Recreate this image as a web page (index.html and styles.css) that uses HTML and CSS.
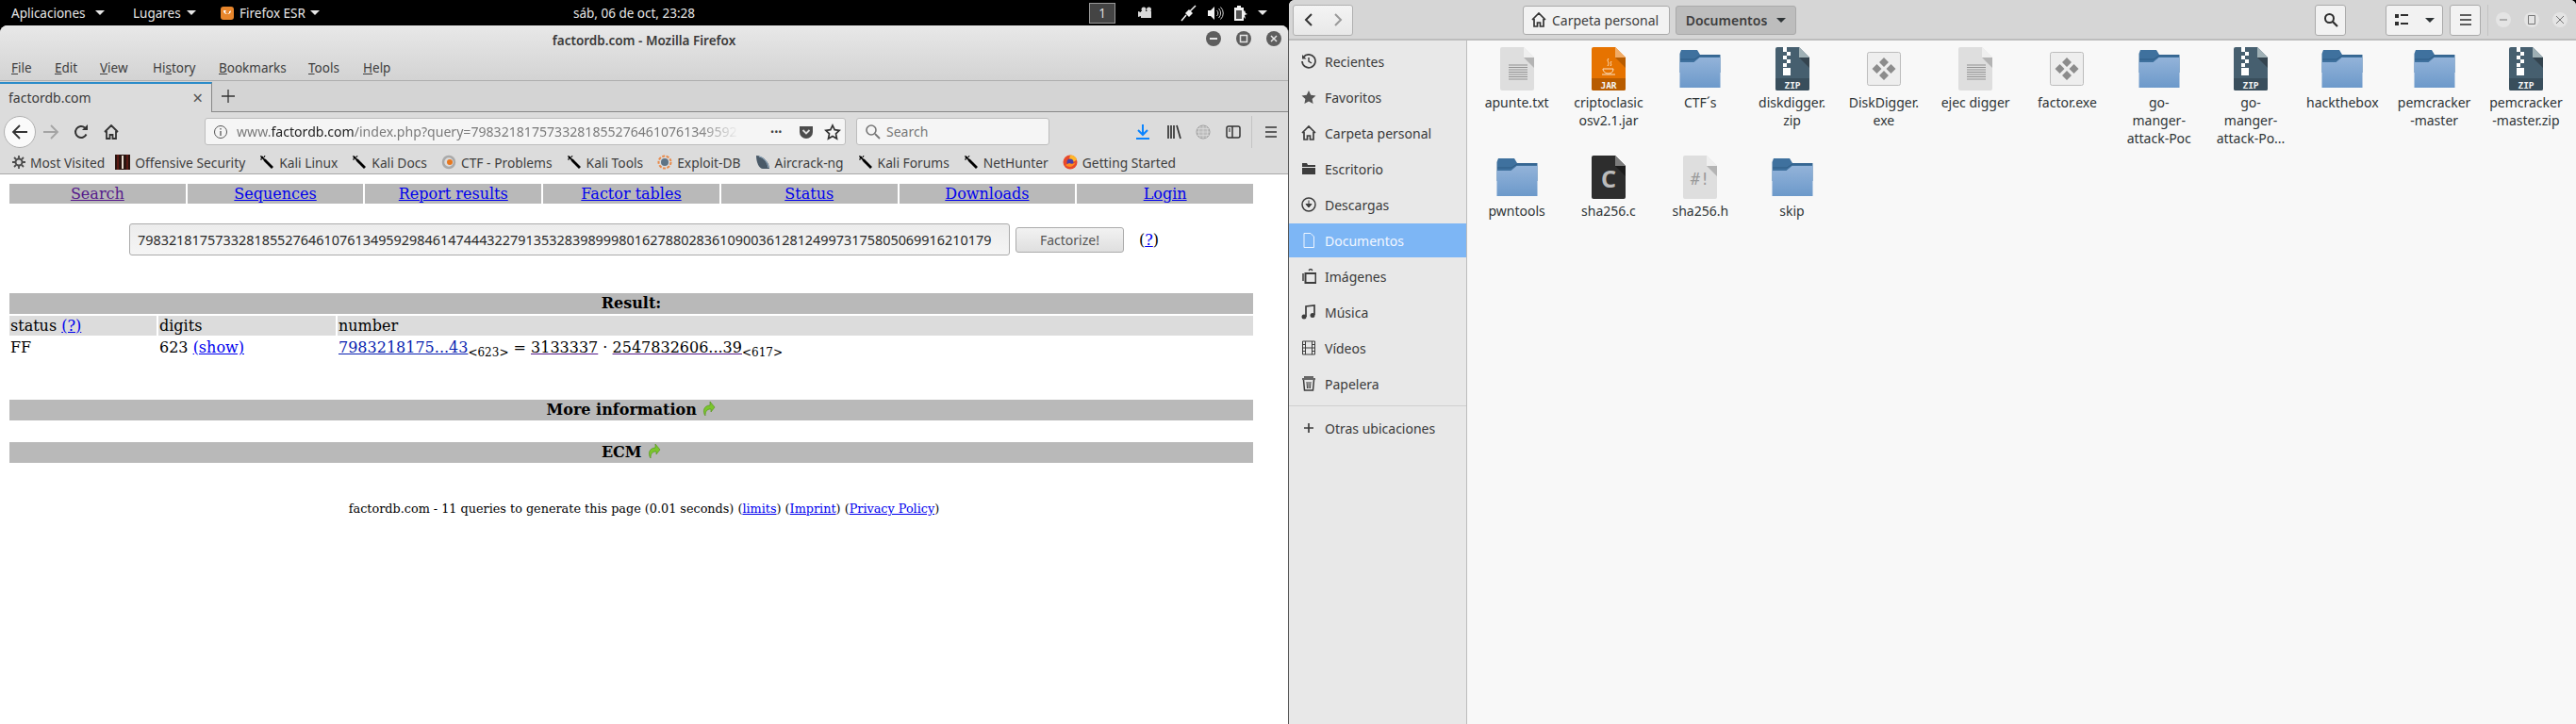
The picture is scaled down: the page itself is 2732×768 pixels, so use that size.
FILE: index.html
```html
<!DOCTYPE html>
<html lang="en">
<head>
    <meta charset="UTF-8">
    <title>factordb.com - Mozilla Firefox</title>
    <link rel="stylesheet" href="styles.css">
</head>
<body>
    <svg class="defs" width="0" height="0">
        <!-- bookmark torch -->
        <symbol id="kali" viewBox="0 0 16 16"><path d="M1 1l3 1 1 2 2 1 3 3 5 5-2 2-5-5-3-3-1-2-2-1z" fill="#000"/><path d="M5 3l1-2M3 5L1 5" stroke="#000"/></symbol>
        <!-- file icons -->
        <symbol id="folder" viewBox="0 0 48 48"><path d="M2.5 8v20h43V9H24l-3-5H4z" fill="#3f719e"/><path d="M3 14h15l6-4h21" stroke="#2f5c85" fill="none"/><path d="M2.500 44V17h15l6-5h22v32z" fill="url(#fold)"/><defs><linearGradient id="fold" x1="0" y1="0" x2="0" y2="1"><stop offset="0" stop-color="#93b3d9"/><stop offset="1" stop-color="#6c99ca"/></linearGradient></defs></symbol>
        <symbol id="txt" viewBox="0 0 48 48"><path d="M6 3a2 2 0 0 1 2-2h23l11 11v33a2 2 0 0 1-2 2H8a2 2 0 0 1-2-2z" fill="#dedede"/><path d="M31 1l11 11H31z" fill="#efefef"/><path d="M31 12h11v11z" fill="#b4b4b4"/><path d="M15 20h20M15 22.500h20M15 25h20M15 27.500h20M15 30h20M15 32.500h20M15 35h20" stroke="#919191"/></symbol>
        <symbol id="jar" viewBox="0 0 48 48"><path d="M6 3a2 2 0 0 1 2-2h23l11 11v33a2 2 0 0 1-2 2H8a2 2 0 0 1-2-2z" fill="#e67300"/><path d="M31 1l11 11H31z" fill="#f1ab66"/><path d="M31 12h11v11z" fill="#b85c00"/><path d="M6 34h36v11a2 2 0 0 1-2 2H8a2 2 0 0 1-2-2z" fill="#b85c00"/><path d="M24 13c-3 3 2 4-1 8M27 16c-2 2 1 3-1 5M18 24h11c0 3-2 5-5 5s-6-2-6-5zM17 30h14" stroke="#fbe3c7" fill="none"/></symbol>
        <symbol id="zip" viewBox="0 0 48 48"><path d="M6 3a2 2 0 0 1 2-2h23l11 11v33a2 2 0 0 1-2 2H8a2 2 0 0 1-2-2z" fill="#465f6f"/><path d="M31 1l11 11H31z" fill="#9fb0b5"/><path d="M31 12h11v11z" fill="#34444f"/><path d="M6 34h36v11a2 2 0 0 1-2 2H8a2 2 0 0 1-2-2z" fill="#394e5c"/><path d="M14 1h4v5h-4zM18 6h4v4h-4zM14 10h4v4h-4zM18 14h4v4h-4zM14 18h4v4h-4zM14 23h8v8h-8z" fill="#fff"/></symbol>
        <symbol id="exe" viewBox="0 0 48 48"><rect x="6.500" y="6.500" width="35" height="35" rx="2" fill="#eee" stroke="#bdbdbd"/><path d="M24 12l5 5-5 5-5-5zM16.500 19l5 5-5 5-5-5zM31.500 19l5 5-5 5-5-5zM24 26l5 5-5 5-5-5z" fill="#8c8c8c"/></symbol>
        <symbol id="csrc" viewBox="0 0 48 48"><path d="M6 3a2 2 0 0 1 2-2h23l11 11v33a2 2 0 0 1-2 2H8a2 2 0 0 1-2-2z" fill="#2d2d2d"/><path d="M31 1l11 11H31z" fill="#7c7c7c"/><path d="M31 12h11v11z" fill="#1c1c1c"/></symbol>
        <symbol id="hdr" viewBox="0 0 48 48"><path d="M6 3a2 2 0 0 1 2-2h23l11 11v33a2 2 0 0 1-2 2H8a2 2 0 0 1-2-2z" fill="#dedede"/><path d="M31 1l11 11H31z" fill="#efefef"/><path d="M31 12h11v11z" fill="#b4b4b4"/></symbol>
        <symbol id="go-arrow" viewBox="0 0 15 16"><path d="M9 0l5 6-4 5V8C6 8 4 10 4 15 1 11 2 4 9 4z" fill="#7ac52c" stroke="#4f8f16" stroke-width=".6"/></symbol>
    </svg>

    <div class="desktop">
        <div class="left-side">
            <div class="topbar">
                <span class="top-item top-apps">Aplicaciones <i class="caret"></i></span>
                <span class="top-item top-places">Lugares <i class="caret"></i></span>
                <span class="top-item top-ff">
                    <svg width="16" height="16" viewBox="0 0 16 16"><rect x="1" y="1" width="14" height="14" rx="3" fill="#e8862c"/><path d="M4 5a4 4 0 1 0 8 0c-1 1-1 1-2 1a2 2 0 1 1-3-1z" fill="#fff"/></svg>
                    Firefox ESR <i class="caret"></i>
                </span>
                <span class="top-clock">sáb, 06 de oct, 23:28</span>
                <span class="workspace">1</span>
                <span class="tray">
                    <svg width="18" height="16" viewBox="0 0 18 16"><path d="M1 6l3 1V6h11v7H4v-2l-3 1z" fill="#d8d8d8"/><circle cx="7" cy="4" r="2.500" fill="#d8d8d8"/><circle cx="12.500" cy="4" r="2.500" fill="#d8d8d8"/></svg>
                    <svg class="tray-plug" width="18" height="18" viewBox="0 0 18 18"><path d="M1 17l5-6M10 7l6-6" stroke="#f2f2f2" stroke-width="1.500"/><path d="M5 9l4-4 4 4-4 4z" fill="#f2f2f2"/></svg>
                    <svg class="tray-vol" width="18" height="16" viewBox="0 0 18 16"><path d="M1 5h3l4-4v14l-4-4H1z" fill="#f2f2f2"/><path d="M10.500 5a4 4 0 0 1 0 6M12.500 3a7 7 0 0 1 0 10M14.500 1.500a9 9 0 0 1 0 13" stroke="#ccc" fill="none"/></svg>
                    <svg class="tray-bat" width="18" height="18" viewBox="0 0 18 18"><path d="M3 3h3V1h4v2h3v14H3z" fill="#f2f2f2"/><path d="M5 6h6v9H5z" fill="#555"/><path d="M12 8l2-2 1 3 2 1-3 1 1 4-3-3z" fill="#f2f2f2"/></svg>
                    <i class="caret caret-tray"></i>
                </span>
            </div>

            <div class="ff-window">
                <div class="ff-head">
                    <div class="ff-title">factordb.com - Mozilla Firefox
                        <span class="ff-buttons">
                            <span class="wm-btn"><svg width="16" height="16" viewBox="0 0 16 16"><path d="M4 7h8v2H4z" fill="#e6e6e6"/></svg></span>
                            <span class="wm-btn"><svg width="16" height="16" viewBox="0 0 16 16"><path d="M4.500 4.500h7v7h-7z" fill="none" stroke="#e6e6e6" stroke-width="1.500"/></svg></span>
                            <span class="wm-btn"><svg width="16" height="16" viewBox="0 0 16 16"><path d="M5 5l6 6M11 5l-6 6" stroke="#e6e6e6" stroke-width="1.500"/></svg></span>
                        </span>
                    </div>
                    <div class="ff-menu">
                        <span class="m-file"><u>F</u>ile</span>
                        <span class="m-edit"><u>E</u>dit</span>
                        <span class="m-view"><u>V</u>iew</span>
                        <span class="m-hist">Hi<u>s</u>tory</span>
                        <span class="m-book"><u>B</u>ookmarks</span>
                        <span class="m-tools"><u>T</u>ools</span>
                        <span class="m-help"><u>H</u>elp</span>
                    </div>
                </div>

                <div class="ff-tabs">
                    <div class="tab">factordb.com <span class="tab-close">×</span></div>
                    <svg class="tab-new" width="16" height="16" viewBox="0 0 16 16"><path d="M8 1v14M1 8h14" stroke="#333" stroke-width="1.300"/></svg>
                </div>

                <div class="ff-nav">
                    <span class="back-btn"><svg width="18" height="18" viewBox="0 0 18 18"><path d="M2 9h15M9 2L2 9l7 7" stroke="#333" stroke-width="1.800" fill="none"/></svg></span>
                    <svg class="nav-fwd" width="18" height="18" viewBox="0 0 18 18"><path d="M1 9h15M9 2l7 7-7 7" stroke="#a4a4a4" stroke-width="1.800" fill="none"/></svg>
                    <svg class="nav-reload" width="16" height="16" viewBox="0 0 16 16"><path d="M13.500 10.500A6 6 0 1 1 12 3.500" stroke="#333" stroke-width="2" fill="none"/><path d="M9 6h6V0z" fill="#333"/></svg>
                    <svg class="nav-home" width="16" height="16" viewBox="0 0 16 16"><path d="M1 8l7-7 7 7M3 7v8h3.500v-4h3v4H13V7" stroke="#333" stroke-width="1.800" fill="none"/></svg>
                    <div class="urlbar">
                        <svg width="16" height="16" viewBox="0 0 16 16"><circle cx="8" cy="8" r="6.500" fill="none" stroke="#555"/><path d="M8 7v5M8 4v1.500" stroke="#555" stroke-width="1.300"/></svg>
                        <span class="url-text">www.<b>factordb.com</b>/index.php?query=79832181757332818552764610761349592</span>
                        <span class="url-dots">•••</span>
                        <svg class="url-pocket" width="16" height="16" viewBox="0 0 16 16"><path d="M1 2h14v6a7 7 0 0 1-14 0z" fill="#4c4c4c"/><path d="M4.500 6L8 9.500 11.500 6" stroke="#ddd" stroke-width="1.800" fill="none"/></svg>
                        <svg class="url-star" width="18" height="18" viewBox="0 0 18 18"><path d="M9 2l2.200 4.700 5 .6-3.700 3.500 1 5.200L9 13.500 4.500 16l1-5.200L1.800 7.300l5-.6z" fill="none" stroke="#333" stroke-width="1.700"/></svg>
                    </div>
                    <div class="searchbar">
                        <svg width="17" height="17" viewBox="0 0 17 17"><circle cx="7" cy="7" r="5" fill="none" stroke="#777" stroke-width="1.600"/><path d="M11 11l5 5" stroke="#777" stroke-width="1.800"/></svg>
                        <span>Search</span>
                    </div>
                    <svg class="tool-dl" width="16" height="18" viewBox="0 0 16 18"><path d="M8 1v11M3 7l5 5 5-5" stroke="#0a84ff" stroke-width="2" fill="none"/><path d="M1 16h14" stroke="#0a84ff" stroke-width="2"/></svg>
                    <svg class="tool-lib" width="16" height="16" viewBox="0 0 16 16"><path d="M2 1v14M5 1v14M8 1v14M11 1l4 14" stroke="#333" stroke-width="1.700"/></svg>
                    <svg class="tool-globe" width="16" height="16" viewBox="0 0 16 16"><circle cx="8" cy="8" r="7" fill="#bdbdbd" stroke="#9a9a9a"/><path d="M1 8h14M8 1v14M2 4.500h12M2 11.500h12M5 2c-2 3-2 9 0 12M11 2c2 3 2 9 0 12" stroke="#dedede" fill="none" stroke-width=".7"/></svg>
                    <svg class="tool-side" width="16" height="16" viewBox="0 0 16 16"><rect x="1" y="2" width="14" height="12" rx="2" fill="none" stroke="#333" stroke-width="1.500"/><path d="M7 2v12" stroke="#333" stroke-width="1.500"/><path d="M3 5h2M3 7h2" stroke="#333"/></svg>
                    <span class="tool-sep"></span>
                    <svg class="tool-menu" width="14" height="14" viewBox="0 0 14 14"><path d="M1 2h12M1 7h12M1 12h12" stroke="#333" stroke-width="1.500"/></svg>
                </div>

                <div class="ff-bookmarks">
                    <span class="bm bm-first"><svg width="14" height="14" viewBox="0 0 14 14"><circle cx="7" cy="7" r="3.500" fill="none" stroke="#4c4c4c" stroke-width="2"/><path d="M7 0v3M7 11v3M0 7h3M11 7h3M2 2l2 2M10 10l2 2M12 2l-2 2M4 10l-2 2" stroke="#4c4c4c" stroke-width="1.800"/></svg>Most Visited</span>
                    <span class="bm"><svg width="16" height="16" viewBox="0 0 16 16"><rect width="16" height="16" fill="#2a1510"/><path d="M2 0h2v16H2zM12 0h2v16h-2z" fill="#5a1a14"/><path d="M7 1h2v14H7z" fill="#e9dcd0"/></svg>Offensive Security</span>
                    <span class="bm"><svg width="16" height="16"><use href="#kali"/></svg>Kali Linux</span>
                    <span class="bm"><svg width="16" height="16"><use href="#kali"/></svg>Kali Docs</span>
                    <span class="bm"><svg width="16" height="16" viewBox="0 0 16 16"><circle cx="8" cy="8" r="6" fill="none" stroke="#a9a9a9" stroke-width="2.500"/><circle cx="9" cy="8" r="3" fill="#e8771e"/></svg>CTF - Problems</span>
                    <span class="bm"><svg width="16" height="16"><use href="#kali"/></svg>Kali Tools</span>
                    <span class="bm"><svg width="16" height="16" viewBox="0 0 16 16"><circle cx="8" cy="8" r="6.500" fill="none" stroke="#e98a4a" stroke-width="2" stroke-dasharray="3 1.500"/><circle cx="8" cy="8" r="4" fill="#5f7486"/></svg>Exploit-DB</span>
                    <span class="bm"><svg width="16" height="16" viewBox="0 0 16 16"><path d="M1 1c7 0 14 7 14 14H8C4 15 1 8 1 1z" fill="#4a5a68"/><path d="M4 2c5 1 9 6 10 12" stroke="#9db7cf" fill="none"/></svg>Aircrack-ng</span>
                    <span class="bm"><svg width="16" height="16"><use href="#kali"/></svg>Kali Forums</span>
                    <span class="bm"><svg width="16" height="16"><use href="#kali"/></svg>NetHunter</span>
                    <span class="bm"><svg width="16" height="16" viewBox="0 0 16 16"><circle cx="8" cy="8" r="7.500" fill="#e8492a"/><path d="M8 .5a7.500 7.500 0 0 1 7 5L11 8 7 5z" fill="#ffb628"/><circle cx="8" cy="8" r="3.500" fill="#4a3fa8"/><path d="M3 11c3 3 8 3 11-3-2 2-5 2-7 1z" fill="#ff8a1e"/></svg>Getting Started</span>
                </div>

                <div class="page">
                    <div class="site-nav">
                        <a class="visited" href="#">Search</a>
                        <a href="#">Sequences</a>
                        <a href="#">Report results</a>
                        <a href="#">Factor tables</a>
                        <a href="#">Status</a>
                        <a href="#">Downloads</a>
                        <a href="#">Login</a>
                    </div>

                    <form class="query">
                        <input class="query-input" type="text" value="79832181757332818552764610761349592984614744432279135328398999801627880283610900361281249973175805069916210179">
                        <button class="query-btn" type="button">Factorize!</button>
                        <span class="query-help">(<a href="#">?</a>)</span>
                    </form>

                    <div class="bar result-bar">Result:</div>
                    <div class="result-row result-head">
                        <div>status <a href="#">(?)</a></div>
                        <div>digits</div>
                        <div>number</div>
                    </div>
                    <div class="result-row result-data">
                        <div>FF</div>
                        <div>623 <a href="#">(show)</a></div>
                        <div><a class="num-comp" href="#">7983218175...43</a><sub>&lt;623&gt;</sub> = <a class="num-fact" href="#">3133337</a> · <a class="num-fact" href="#">2547832606...39</a><sub>&lt;617&gt;</sub></div>
                    </div>

                    <div class="bar more-bar">More information <svg width="15" height="16"><use href="#go-arrow"/></svg></div>
                    <div class="bar ecm-bar">ECM <svg width="15" height="16"><use href="#go-arrow"/></svg></div>

                    <p class="page-foot">factordb.com - 11 queries to generate this page (0.01 seconds) (<a href="#">limits</a>) (<a href="#">Imprint</a>) (<a href="#">Privacy Policy</a>)</p>
                </div>
            </div>
        </div>

        <div class="files">
            <div class="files-toolbar">
                <div class="hist-btns">
                    <svg width="16" height="16" viewBox="0 0 16 16"><path d="M11 2L5 8l6 6" stroke="#333" stroke-width="2" fill="none"/></svg>
                    <svg width="16" height="16" viewBox="0 0 16 16"><path d="M5 2l6 6-6 6" stroke="#999" stroke-width="2" fill="none"/></svg>
                </div>
                <div class="path-btn">
                    <svg width="16" height="16" viewBox="0 0 16 16"><path d="M1 8l7-7 7 7M3 7v8h3.500v-4h3v4H13V7" stroke="#333" stroke-width="1.700" fill="none"/></svg>
                    Carpeta personal
                </div>
                <span class="path-slash"></span>
                <div class="path-btn path-current">Documentos <i class="caret caret-dark"></i></div>
                <div class="tool-btn tool-search"><svg width="16" height="16" viewBox="0 0 16 16"><circle cx="6.500" cy="6.500" r="4.500" fill="none" stroke="#2e2e2e" stroke-width="2"/><path d="M10 10l5 5" stroke="#2e2e2e" stroke-width="2.200"/></svg></div>
                <div class="tool-btn tool-view">
                    <svg width="16" height="16" viewBox="0 0 16 16"><path d="M1 2h4v4H1zM1 10h4v4H1z" fill="#2e2e2e"/><path d="M7 3h8M7 12h8" stroke="#2e2e2e" stroke-width="2"/></svg>
                    <i class="caret caret-dark"></i>
                </div>
                <div class="tool-btn tool-burger"><svg width="14" height="14" viewBox="0 0 14 14"><path d="M1 2h12M1 7h12M1 12h12" stroke="#2e2e2e" stroke-width="1.700"/></svg></div>
                <span class="files-sep"></span>
                <span class="win-btn win-min"><svg width="12" height="12" viewBox="0 0 12 12"><path d="M2 6h8" stroke="#777"/></svg></span>
                <span class="win-btn"><svg width="12" height="12" viewBox="0 0 12 12"><path d="M2.500 1.500h7v9h-7z" stroke="#777" fill="none"/></svg></span>
                <span class="win-btn"><svg width="12" height="12" viewBox="0 0 12 12"><path d="M2 2l8 8M10 2l-8 8" stroke="#777"/></svg></span>
            </div>

            <div class="files-body">
                <div class="sidebar">
                    <div class="side-row"><svg width="16" height="16" viewBox="0 0 16 16"><path d="M2.500 3.500A7 7 0 1 1 1 8" fill="none" stroke="#3d3d3d" stroke-width="1.700"/><path d="M1 1v4.500h4.500z" fill="#3d3d3d"/><path d="M8 4v4l3 2" fill="none" stroke="#3d3d3d" stroke-width="1.500"/></svg>Recientes</div>
                    <div class="side-row"><svg width="16" height="16" viewBox="0 0 16 16"><path d="M8 1l2.200 4.800 5.300.6-3.900 3.500 1 5.100L8 12.500 3.400 15l1-5.100L.5 6.400l5.300-.6z" fill="#555"/></svg>Favoritos</div>
                    <div class="side-row"><svg width="16" height="16" viewBox="0 0 16 16"><path d="M1 8l7-7 7 7M3 7v8h3.500v-4h3v4H13V7" stroke="#3d3d3d" stroke-width="1.700" fill="none"/></svg>Carpeta personal</div>
                    <div class="side-row"><svg width="16" height="16" viewBox="0 0 16 16"><path d="M1 2h5l1 2h8v2H1z" fill="#3d3d3d"/><path d="M1 7h14v7H1z" fill="#3d3d3d"/></svg>Escritorio</div>
                    <div class="side-row"><svg width="16" height="16" viewBox="0 0 16 16"><circle cx="8" cy="8" r="7" fill="none" stroke="#3d3d3d" stroke-width="1.500"/><path d="M8 3.500v6M5 7.500l3 3.500 3-3.500z" fill="#3d3d3d" stroke="#3d3d3d"/></svg>Descargas</div>
                    <div class="side-row side-active"><svg width="16" height="16" viewBox="0 0 16 16"><path d="M3 .5h7L13.500 4v11.500H3z" fill="none" stroke="#eef5ff"/></svg>Documentos</div>
                    <div class="side-row"><svg width="16" height="16" viewBox="0 0 16 16"><path d="M4.500 5h11v10h-11z" fill="none" stroke="#3d3d3d" stroke-width="2"/><path d="M2 5v8M8 2l2-2 2 2" stroke="#3d3d3d" stroke-width="1.500" fill="none"/></svg>Imágenes</div>
                    <div class="side-row"><svg width="16" height="16" viewBox="0 0 16 16"><path d="M5 13V2l9-1v10" stroke="#3d3d3d" stroke-width="1.700" fill="none"/><circle cx="3" cy="13" r="2.500" fill="#3d3d3d"/><circle cx="12" cy="11.500" r="2.500" fill="#3d3d3d"/></svg>Música</div>
                    <div class="side-row"><svg width="16" height="16" viewBox="0 0 16 16"><path d="M1.500 1h13v14h-13zM4.500 1v14M11.500 1v14M4.500 8h7M1.500 4.500h3M1.500 8h3M1.500 11.500h3M11.500 4.500h3M11.500 8h3M11.500 11.500h3" stroke="#3d3d3d" fill="none"/></svg>Vídeos</div>
                    <div class="side-row"><svg width="16" height="16" viewBox="0 0 16 16"><path d="M1 3h14M3 1h10M2.500 4l1 11h9l1-11" stroke="#3d3d3d" stroke-width="1.500" fill="none"/><path d="M6 6l.5 7M8 6v7M10 6l-.5 7" stroke="#3d3d3d"/></svg>Papelera</div>
                    <div class="side-sep"></div>
                    <div class="side-row side-other"><svg width="16" height="16" viewBox="0 0 16 16"><path d="M8 3v10M3 8h10" stroke="#3d3d3d" stroke-width="1.700"/></svg>Otras ubicaciones</div>
                </div>

                <div class="file-grid">
                    <div class="file"><svg width="48" height="48"><use href="#txt"/></svg><span>apunte.txt</span></div>
                    <div class="file"><svg width="48" height="48"><use href="#jar"/><text x="24" y="44.500" text-anchor="middle" class="badge">JAR</text></svg><span>criptoclasic<br>osv2.1.jar</span></div>
                    <div class="file"><svg width="48" height="48"><use href="#folder"/></svg><span>CTF´s</span></div>
                    <div class="file"><svg width="48" height="48"><use href="#zip"/><text x="24" y="44.500" text-anchor="middle" class="badge">ZIP</text></svg><span>diskdigger.<br>zip</span></div>
                    <div class="file"><svg width="48" height="48"><use href="#exe"/></svg><span>DiskDigger.<br>exe</span></div>
                    <div class="file"><svg width="48" height="48"><use href="#txt"/></svg><span>ejec digger</span></div>
                    <div class="file"><svg width="48" height="48"><use href="#exe"/></svg><span>factor.exe</span></div>
                    <div class="file"><svg width="48" height="48"><use href="#folder"/></svg><span>go-<br>manger-<br>attack-Poc</span></div>
                    <div class="file"><svg width="48" height="48"><use href="#zip"/><text x="24" y="44.500" text-anchor="middle" class="badge">ZIP</text></svg><span>go-<br>manger-<br>attack-Po...</span></div>
                    <div class="file"><svg width="48" height="48"><use href="#folder"/></svg><span>hackthebox</span></div>
                    <div class="file"><svg width="48" height="48"><use href="#folder"/></svg><span>pemcracker<br>-master</span></div>
                    <div class="file"><svg width="48" height="48"><use href="#zip"/><text x="24" y="44.500" text-anchor="middle" class="badge">ZIP</text></svg><span>pemcracker<br>-master.zip</span></div>
                    <div class="file"><svg width="48" height="48"><use href="#folder"/></svg><span>pwntools</span></div>
                    <div class="file"><svg width="48" height="48"><use href="#csrc"/><text x="24" y="35" text-anchor="middle" class="c-letter">C</text></svg><span>sha256.c</span></div>
                    <div class="file"><svg width="48" height="48"><use href="#hdr"/><text x="24" y="32" text-anchor="middle" class="h-letter">#!</text></svg><span>sha256.h</span></div>
                    <div class="file"><svg width="48" height="48"><use href="#folder"/></svg><span>skip</span></div>
                </div>
            </div>
        </div>
    </div>
</body>
</html>
```

FILE: styles.css
```css
html, body {
    margin: 0;
    height: 100%;
    overflow: hidden;
    background: #000;
}

body {
    font-family: "Noto Sans", sans-serif;
    font-size: 14px;
    color: #2e3436;
}

.defs {
    position: absolute;
}

.badge {
    font: bold 9.500px "DejaVu Sans Mono", monospace;
    fill: #f4f4f4;
}

.c-letter {
    font: bold 25px "Noto Sans", sans-serif;
    fill: #bbb;
}

.h-letter {
    font: 17px "DejaVu Sans Mono", monospace;
    fill: #9a9a9a;
}

.desktop {
    display: flex;
    width: 2732px;
    height: 768px;
}

.left-side {
    width: 1367px;
    flex: none;
    display: flex;
    flex-direction: column;
}

/* top panel */
.topbar {
    height: 27px;
    display: flex;
    align-items: center;
    color: #e6e6e6;
    font-size: 13.500px;
}

.top-item {
    display: flex;
    align-items: center;
    gap: 6px;
    white-space: nowrap;
}

.top-apps { margin-left: 12px; width: 129px; gap: 10px; }
.top-places { width: 91px; }
.top-ff { gap: 5px; width: 375px; margin-left: 1px; }

.caret {
    display: inline-block;
    width: 0;
    height: 0;
    border-left: 5px solid transparent;
    border-right: 5px solid transparent;
    border-top: 5px solid #e6e6e6;
}

.caret-dark {
    border-top-color: #2e3436;
}

.caret-tray {
    margin-left: 10px;
}

.top-clock {
    white-space: nowrap;
    width: 547px;
}

.workspace {
    width: 26px;
    height: 20px;
    background: #444;
    border: 1px solid #999;
    text-align: center;
    line-height: 20px;
    color: #ddd;
}

.tray {
    margin-left: 23px;
    display: flex;
    align-items: center;
}

.tray-plug { margin-left: 28px; }
.tray-vol { margin-left: 10px; }
.tray-bat { margin-left: 8px; }

/* firefox window */
.ff-window {
    width: 1366px;
    flex: 1;
    background: #fff;
    border-radius: 8px 8px 0 0;
    border-right: 1px solid #555;
    overflow: hidden;
    display: flex;
    flex-direction: column;
}

.ff-head {
    height: 58px;
    background: linear-gradient(#e8e8e8, #d3d3d3);
    border-bottom: 1px solid #aeaeae;
}

.ff-title {
    height: 32px;
    display: flex;
    align-items: center;
    justify-content: center;
    font-weight: 600;
    font-size: 13.500px;
    color: #3a3a3a;
    position: relative;
}

.ff-buttons {
    position: absolute;
    right: 7px;
    top: 6px;
    display: flex;
    gap: 16px;
}

.wm-btn {
    width: 16px;
    height: 16px;
    border-radius: 50%;
    background: #5e5e5e;
    display: flex;
}

.ff-menu {
    height: 26px;
    display: flex;
    align-items: center;
    color: #3d3d3d;
    font-size: 13.500px;
}

.m-file { margin-left: 12px; width: 46px; }
.m-edit { width: 48px; }
.m-view { width: 56px; }
.m-hist { width: 70px; }
.m-book { width: 95px; }
.m-tools { width: 58px; }

.ff-tabs {
    height: 32px;
    background: #d4d4d4;
    border-bottom: 1px solid #888;
    display: flex;
    align-items: center;
}

.tab {
    width: 215px;
    height: 30px;
    margin-top: 1px;
    padding-left: 9px;
    background: #dcdcdc;
    border-top: 2px solid #2a8bc9;
    border-right: 1px solid #888;
    display: flex;
    align-items: center;
    justify-content: space-between;
    color: #3a3a3a;
}

.tab-close {
    font-size: 19px;
    color: #555;
    margin-right: 9px;
}

.tab-new {
    margin-left: 9px;
}

.ff-nav {
    height: 41px;
    background: #dcdcdc;
    display: flex;
    align-items: center;
}

.back-btn {
    width: 32px;
    height: 32px;
    margin-left: 4px;
    border: 1px solid #b0b0b0;
    border-radius: 50%;
    background: #fafafa;
    display: flex;
    align-items: center;
    justify-content: center;
}

.nav-fwd { margin-left: 7px; }
.nav-reload { margin-left: 15px; }
.nav-home { margin-left: 16px; }

.urlbar {
    width: 678px;
    height: 27px;
    margin-left: 91px;
    background: #f5f5f5;
    border: 1px solid #bdbdbd;
    border-radius: 3px;
    display: flex;
    align-items: center;
}

.urlbar > svg:first-child { margin-left: 8px; }

.url-text {
    width: 533px;
    margin-left: 9px;
    overflow: hidden;
    white-space: nowrap;
    color: #7a7a7a;
    font-size: 14.100px;
    -webkit-mask-image: linear-gradient(to right, #000 92%, transparent);
    mask-image: linear-gradient(to right, #000 92%, transparent);
}

.url-text b {
    font-weight: 400;
    color: #222;
}

.url-dots {
    margin-left: 33px;
    font-size: 11px;
    color: #444;
}

.url-pocket { margin-left: 18px; }
.url-star { margin-left: 11px; }

.searchbar {
    width: 203px;
    height: 27px;
    margin-left: 11px;
    background: #f5f5f5;
    border: 1px solid #bdbdbd;
    border-radius: 3px;
    display: flex;
    align-items: center;
    gap: 6px;
    color: #777;
}

.searchbar svg { margin-left: 8px; }

.tool-dl { margin-left: 91px; }
.tool-lib { margin-left: 17px; }
.tool-globe { margin-left: 15px; }
.tool-side { margin-left: 16px; }

.tool-sep {
    width: 1px;
    height: 34px;
    background: #c4c4c4;
    margin-left: 11px;
}

.tool-menu { margin-left: 13px; }

.ff-bookmarks {
    height: 24px;
    background: #dcdcdc;
    border-bottom: 1px solid #a8a8a8;
    display: flex;
    align-items: center;
    padding-left: 13px;
    gap: 15px;
    font-size: 13.800px;
    color: #3d3d3d;
    white-space: nowrap;
}

.bm {
    display: flex;
    align-items: center;
    gap: 5px;
}

.bm-first {
    margin-right: -4px;
}

/* factordb page */
.page {
    flex: 1;
    background: #fff;
    font-family: "DejaVu Serif", serif;
    font-size: 16px;
    color: #000;
}

.page a {
    color: #0000ee;
}

.site-nav {
    margin: 10px 0 0 10px;
    width: 1319px;
    display: grid;
    grid-template-columns: repeat(7, 1fr);
    gap: 2px;
}

.site-nav a {
    height: 21px;
    line-height: 21px;
    text-align: center;
    background: #b9b9b9;
}

.site-nav a.visited {
    color: #551a8b;
}

.query {
    margin: 21px 0 0;
    height: 34px;
    display: flex;
    align-items: center;
    justify-content: center;
}

.query-input {
    width: 934px;
    height: 34px;
    box-sizing: border-box;
    padding: 0 8px;
    border: 1px solid #ababab;
    border-radius: 3px;
    background: linear-gradient(#ececec, #f5f5f5);
    font-family: "Noto Sans", sans-serif;
    font-size: 14.400px;
    color: #2a2a2a;
}

.query-btn {
    width: 115px;
    height: 27px;
    margin-left: 6px;
    border: 1px solid #ababab;
    border-radius: 3px;
    background: linear-gradient(#f2f2f2, #dfdfdf);
    font-family: "Noto Sans", sans-serif;
    font-size: 14px;
    color: #555;
}

.query-help {
    margin-left: 16px;
}

.bar {
    margin-left: 10px;
    width: 1319px;
    height: 22px;
    line-height: 22px;
    background: #b9b9b9;
    font-weight: 700;
    text-align: center;
}

.bar svg {
    vertical-align: -2px;
}

.result-bar { margin-top: 40px; }
.more-bar { margin-top: 44px; }
.ecm-bar { margin-top: 23px; }

.result-row {
    margin: 2px 0 0 10px;
    width: 1319px;
    display: grid;
    grid-template-columns: 156px 188px 1fr;
    gap: 2px;
}

.result-row > div {
    padding-left: 1px;
}

.result-head > div {
    height: 21px;
    line-height: 21px;
    background: #dcdcdc;
}

.result-data > div {
    height: 22px;
    line-height: 22px;
}

.result-data sub {
    font-size: 12px;
}

.page a.num-comp {
    color: #0a1fb0;
}

.page a.num-fact {
    color: #000;
    text-decoration-color: #551a8b;
}

.page-foot {
    margin: 41px 0 0;
    text-align: center;
    font-size: 12.800px;
    line-height: 16px;
}

/* files window */
.files {
    flex: 1;
    display: flex;
    flex-direction: column;
    background: #f8f8f8;
    border-radius: 6px 6px 0 0;
    overflow: hidden;
}

.files-toolbar {
    height: 40px;
    padding-top: 1px;
    background: #d6d6d6;
    border-bottom: 2px solid #bdbdbd;
    display: flex;
    align-items: center;
    flex: none;
}

.hist-btns {
    width: 64px;
    height: 33px;
    margin-left: 4px;
    background: linear-gradient(#f4f4f4, #e8e8e8);
    border: 1px solid #b0b0b0;
    border-radius: 3px;
    box-sizing: border-box;
    display: flex;
    align-items: center;
    justify-content: space-around;
}

.path-btn {
    height: 31px;
    margin-left: 180px;
    padding: 0 8px;
    box-sizing: border-box;
    width: 156px;
    flex: none;
    background: #f2f2f2;
    border: 1px solid #aaa;
    border-radius: 3px;
    display: flex;
    align-items: center;
    gap: 6px;
    white-space: nowrap;
    color: #3d3d3d;
}

.path-slash {
    width: 6px;
}

.path-current {
    width: 128px;
    margin-left: 0;
    background: #bdbdbd;
    font-weight: 600;
    justify-content: center;
    gap: 10px;
}

.tool-btn {
    height: 33px;
    box-sizing: border-box;
    background: #f2f2f2;
    border: 1px solid #aaa;
    border-radius: 3px;
    display: flex;
    align-items: center;
    justify-content: center;
}

.tool-search { width: 33px; margin-left: 550px; }
.tool-view { width: 61px; margin-left: 42px; gap: 17px; }
.tool-burger { width: 33px; margin-left: 7px; }

.files-sep {
    width: 1px;
    height: 33px;
    background: #c4c4c4;
    margin-left: 7px;
}

.win-btn {
    width: 16px;
    height: 16px;
    border-radius: 50%;
    background: #e4e4e4;
    display: flex;
    align-items: center;
    justify-content: center;
    margin-left: 14px;
}

.win-min {
    margin-left: 8px;
}

.files-body {
    flex: 1;
    display: flex;
}

.sidebar {
    width: 188px;
    flex: none;
    background: #e8e8e8;
    border-right: 1px solid #bdbdbd;
    padding-top: 3px;
}

.side-row {
    height: 38px;
    display: flex;
    align-items: center;
    gap: 9px;
    padding-left: 13px;
    color: #3a3a3a;
}

.side-active {
    background: #7db6f5;
    color: #f2f7ff;
    height: 36px;
    margin: 1px 0;
}

.side-sep {
    height: 1px;
    background: #cfcfcf;
    margin-top: 4px;
}

.side-other {
    margin-top: 4px;
}

.file-grid {
    display: grid;
    grid-template-columns: repeat(12, 97.300px);
    grid-auto-rows: 115px;
    padding: 6px 0 0 4px;
}

.file {
    display: flex;
    flex-direction: column;
    align-items: center;
    text-align: center;
    color: #2e3436;
    white-space: nowrap;
    line-height: 19px;
}

.file span {
    margin-top: 2px;
}
```
